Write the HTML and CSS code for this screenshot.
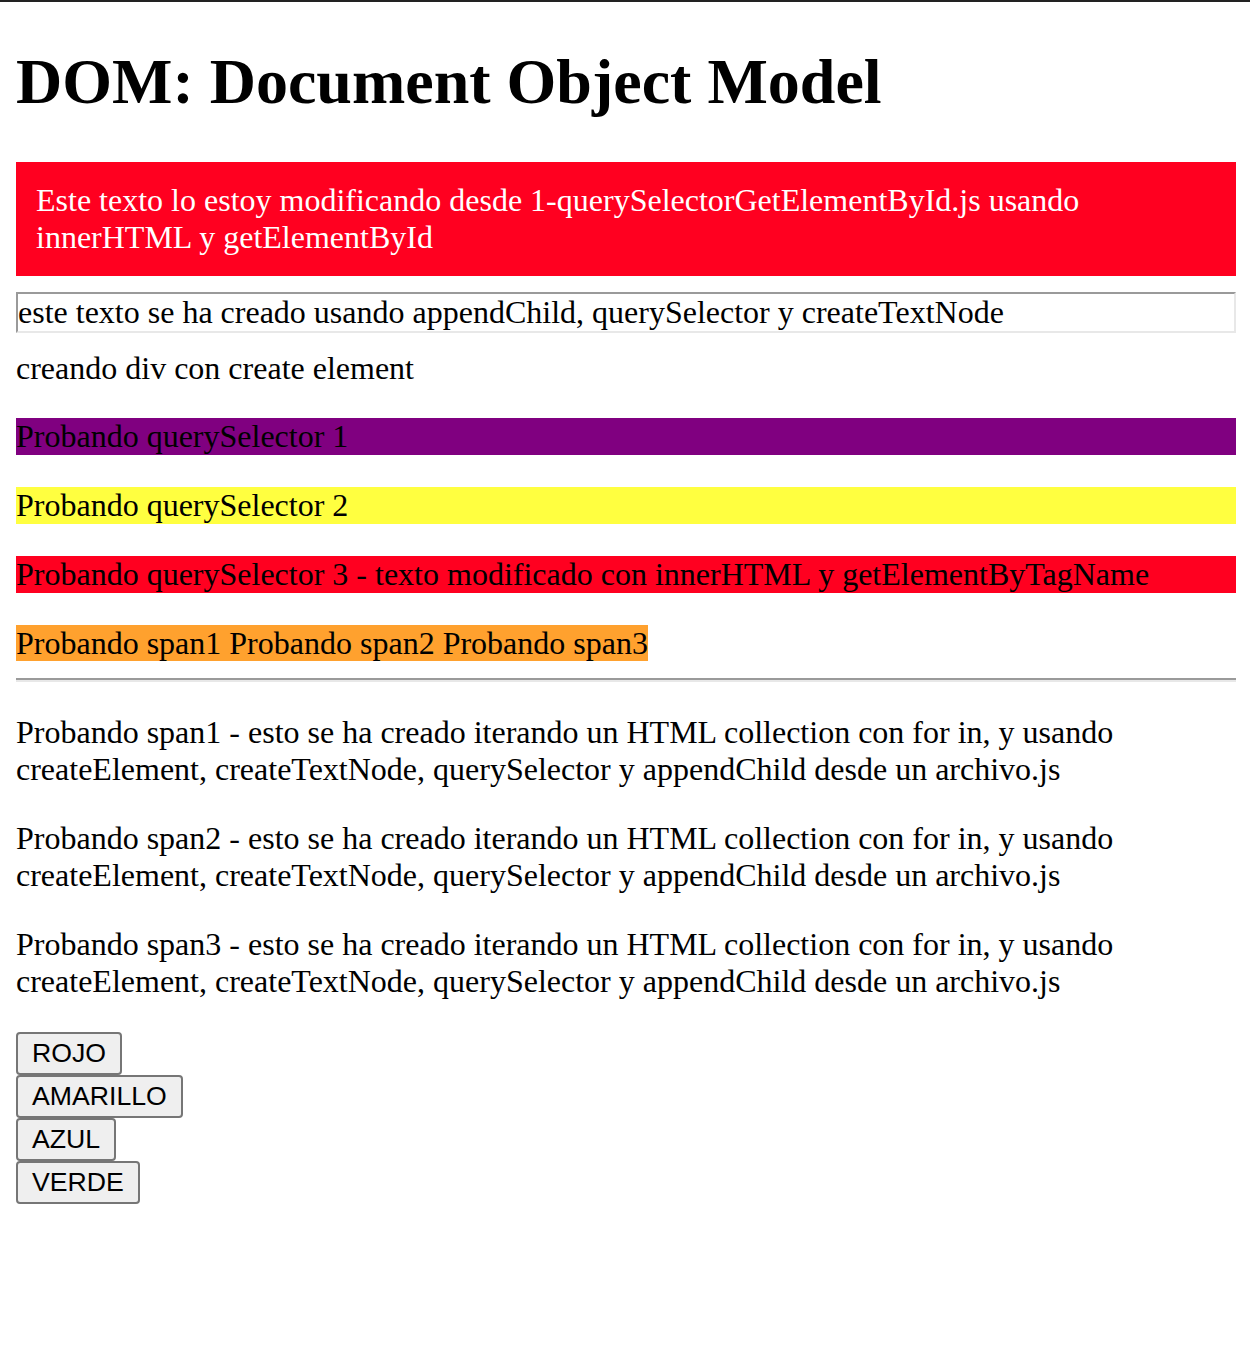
FILE: index.html
```html
<!DOCTYPE html>
<html lang="es">
<head>
<meta charset="utf-8">
<title>DOM</title>
<link rel="stylesheet" href="styles.css">
</head>
<body>
<div class="topline"></div>
<main class="page">
  <h1 class="title">DOM: Document Object Model</h1>
  <div class="banner">Este texto lo estoy modificando desde 1-querySelectorGetElementById.js usando innerHTML y getElementById</div>
  <div class="inset">este texto se ha creado usando appendChild, querySelector y createTextNode</div>
  <div class="created">creando div con create element</div>
  <p class="bar bar-purple">Probando querySelector 1</p>
  <p class="bar bar-yellow">Probando querySelector 2</p>
  <p class="bar bar-red">Probando querySelector 3 - texto modificado con innerHTML y getElementByTagName</p>
  <div class="spans"><span class="orange">Probando span1 Probando span2 Probando span3</span></div>
  <hr class="rule">
  <p class="para">Probando span1 - esto se ha creado iterando un HTML collection con for in, y usando createElement, createTextNode, querySelector y appendChild desde un archivo.js</p>
  <p class="para">Probando span2 - esto se ha creado iterando un HTML collection con for in, y usando createElement, createTextNode, querySelector y appendChild desde un archivo.js</p>
  <p class="para">Probando span3 - esto se ha creado iterando un HTML collection con for in, y usando createElement, createTextNode, querySelector y appendChild desde un archivo.js</p>
  <div class="buttons">
    <button class="btn">ROJO</button>
    <button class="btn">AMARILLO</button>
    <button class="btn">AZUL</button>
    <button class="btn">VERDE</button>
  </div>
</main>
</body>
</html>
```
FILE: styles.css
```css
html, body {
  margin: 0;
  padding: 0;
  background: #ffffff;
}
body {
  font-family: "Liberation Serif", "Times New Roman", serif;
  font-size: 32px;
  color: #000;
}
.topline {
  height: 2px;
  background: #222222;
}
.page {
  padding: 0 14px 0 16px;
  display: flow-root;
}
.title {
  font-size: 64px;
  font-weight: bold;
  margin: 43px 0 43px;
  line-height: normal;
}
.banner {
  background: #ff0020;
  color: #ffffff;
  padding: 20px;
  margin-bottom: 16px;
}
.inset {
  border-width: 2px;
  border-style: solid;
  border-top-color: #9a9a9a;
  border-left-color: #9a9a9a;
  border-right-color: #e8e8e8;
  border-bottom-color: #e8e8e8;
  margin-bottom: 17px;
}
.created {
  margin: 0;
}
.bar {
  margin: 31px 0 32px;
}
.bar-purple { background: #800080; }
.bar-yellow { background: #ffff40; }
.bar-red { background: #ff0020; }
.spans { margin: 0; }
.orange { background: #ffa12e; }
.rule {
  margin: 16px 0;
  border: 0;
  border-top: 2px solid #9a9a9a;
  border-bottom: 2px solid #e8e8e8;
  height: 0;
}
.para {
  margin: 32px 0;
}
.buttons {
  display: flex;
  flex-direction: column;
  align-items: flex-start;
  gap: 0;
}
.btn {
  font-family: "Liberation Sans", Arial, sans-serif;
  font-size: 26.67px;
  padding: 4px 14px;
  border: 2px solid #767676;
  border-radius: 4px;
  background: #efefef;
  color: #000;
  margin: 0;
  line-height: normal;
}
```
